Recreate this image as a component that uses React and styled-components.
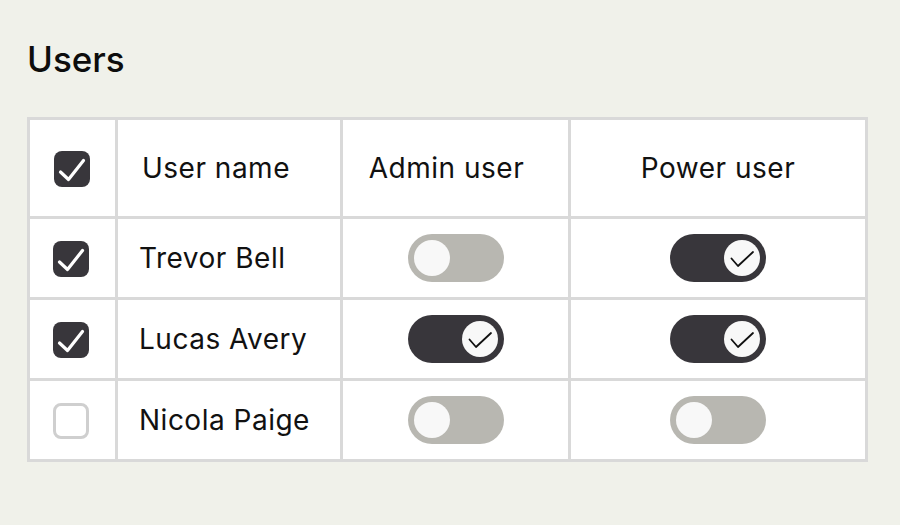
import React from "react"
import styled, { createGlobalStyle } from "styled-components"

const GlobalStyle = createGlobalStyle`
  html, body {
    margin: 0;
    background: #f0f1ea;
  }
  body {
    font-family: Inter, "Noto Sans", sans-serif;
    color: #111;
  }
`

const users = [
  { name: "Trevor Bell", selected: true, admin: false, power: true },
  { name: "Lucas Avery", selected: true, admin: true, power: true },
  { name: "Nicola Paige", selected: false, admin: false, power: false },
]

const Page = styled.div`
  padding: 35px 34px 0 27px;
`

const Title = styled.h1`
  margin: 0 0 34px;
  font-size: 35px;
  font-weight: 500;
  line-height: 48px;
  color: #0d0d0d;
`

const Table = styled.table`
  width: 838px;
  border-collapse: collapse;
  table-layout: fixed;
  background: #fff;
  border: 3px solid #d9d9d9;
`

const Row = styled.tr`
  height: ${(p) => p.$h}px;
`

const Cell = styled.td`
  border: 3px solid #d9d9d9;
  padding: 0 ${(p) => p.$padRight || 0}px 0 ${(p) => p.$pad || 0}px;
  font-size: 28px;
  letter-spacing: 0.5px;
  text-align: ${(p) => p.$align || "center"};
  vertical-align: middle;
  color: #111;
`

const HeadCell = styled(Cell).attrs({ as: "th" })`
  font-weight: 400;
`

const Box = styled.span`
  display: inline-flex;
  align-items: center;
  justify-content: center;
  width: 36px;
  height: 36px;
  box-sizing: border-box;
  border-radius: 8px;
  background: ${(p) => (p.$on ? "#38363b" : "#fff")};
  border: ${(p) => (p.$on ? "none" : "3px solid #cfcfcf")};
  vertical-align: middle;
`

const Track = styled.span`
  display: inline-flex;
  align-items: center;
  justify-content: ${(p) => (p.$on ? "flex-end" : "flex-start")};
  width: 96px;
  height: 48px;
  padding: 0 6px;
  box-sizing: border-box;
  border-radius: 24px;
  background: ${(p) => (p.$on ? "#38363b" : "#b8b7b1")};
  vertical-align: middle;
`

const Knob = styled.span`
  display: flex;
  width: 36px;
  height: 36px;
  border-radius: 50%;
  background: #f8f8f8;
`

const Checkbox = ({ on }) => (
  <Box $on={on}>
    {on && (
      <svg width="36" height="36" viewBox="0 0 36 36">
        <path d="M6.5 21 L14.5 28.5 L29.5 9.5" fill="none" stroke="#fff" strokeWidth="3.2" strokeLinecap="round" strokeLinejoin="round" />
      </svg>
    )}
  </Box>
)

const Toggle = ({ on }) => (
  <Track $on={on}>
    <Knob>
      {on && (
        <svg width="36" height="36" viewBox="0 0 36 36">
          <path d="M7.5 18.5 L14 26 L29 12" fill="none" stroke="#111" strokeWidth="1.8" strokeLinecap="round" strokeLinejoin="round" />
        </svg>
      )}
    </Knob>
  </Track>
)

export default function App() {
  return (
    <Page>
      <GlobalStyle />
      <Title>Users</Title>
      <Table>
        <colgroup>
          <col style={{ width: 88 }} />
          <col style={{ width: 225 }} />
          <col style={{ width: 228 }} />
          <col style={{ width: 297 }} />
        </colgroup>
        <thead>
          <Row $h={99}>
            <HeadCell $padRight={2}>
              <Checkbox on />
            </HeadCell>
            <HeadCell $align="left" $pad={24}>User name</HeadCell>
            <HeadCell $padRight={18}>Admin user</HeadCell>
            <HeadCell>Power user</HeadCell>
          </Row>
        </thead>
        <tbody>
          {users.map((u) => (
            <Row $h={81} key={u.name}>
              <Cell $padRight={4}>
                <Checkbox on={u.selected} />
              </Cell>
              <Cell $align="left" $pad={21}>{u.name}</Cell>
              <Cell>
                <Toggle on={u.admin} />
              </Cell>
              <Cell>
                <Toggle on={u.power} />
              </Cell>
            </Row>
          ))}
        </tbody>
      </Table>
    </Page>
  )
}
